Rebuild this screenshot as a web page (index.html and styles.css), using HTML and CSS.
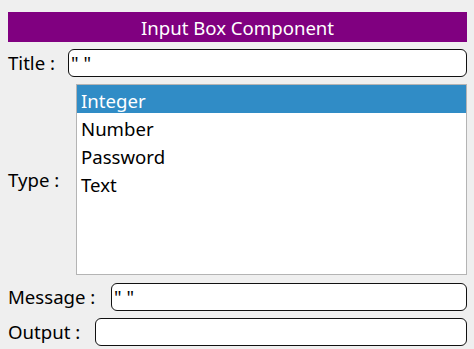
FILE: index.html
```html
<!DOCTYPE html>
<html>
<head>
    <title>Input Box Component</title>
    <link rel="stylesheet" href="styles.css">
</head>
<body>
    <div class="app">
        <div class="header">Input Box Component</div>

        <!-- Title -->
        <div class="row">
            <label class="label label-title">Title :</label>
            <div class="field">" "</div>
        </div>

        <!-- Type list -->
        <div class="row row-list">
            <label class="label label-type">Type :</label>
            <ul class="list">
                <li class="selected">Integer</li>
                <li>Number</li>
                <li>Password</li>
                <li>Text</li>
            </ul>
        </div>

        <!-- Message -->
        <div class="row">
            <label class="label label-message">Message :</label>
            <div class="field">" "</div>
        </div>

        <!-- Output -->
        <div class="row">
            <label class="label label-output">Output :</label>
            <div class="field"></div>
        </div>
    </div>
</body>
</html>
```

FILE: styles.css
```css
html, body {
    margin: 0;
    padding: 0;
    background-color: #efefef;
}

body {
    font-family: "Noto Sans", "Open Sans", sans-serif;
    font-size: 18.6px;
    color: #000;
}

.app {
    display: flex;
    flex-direction: column;
    gap: 7px;
    padding: 12px 7px 0 8px;
}

.header {
    height: 30px;
    line-height: 32px;
    background-color: #800080;
    color: #fff;
    text-align: center;
}

.row {
    display: flex;
    align-items: center;
    height: 28px;
}

.row-list {
    height: 191px;
    margin-bottom: 1px;
}

.label {
    flex: none;
    line-height: 30px;
}

.label-title { width: 60px; }
.label-type { width: 68px; }
.label-message { width: 103px; }
.label-output { width: 87px; }

.field {
    flex: 1;
    box-sizing: border-box;
    height: 28px;
    line-height: 26px;
    padding: 0 2px;
    background: #fff;
    border: 1px solid #111;
    border-radius: 6px;
}

.list {
    flex: 1;
    box-sizing: border-box;
    height: 191px;
    margin: 0;
    padding: 0;
    list-style: none;
    background: #fff;
    border: 1px solid #b4b4b4;
}

.list li {
    height: 28px;
    line-height: 31px;
    padding-left: 4px;
}

.list li.selected {
    background-color: #308cc6;
    color: #fff;
}
```
